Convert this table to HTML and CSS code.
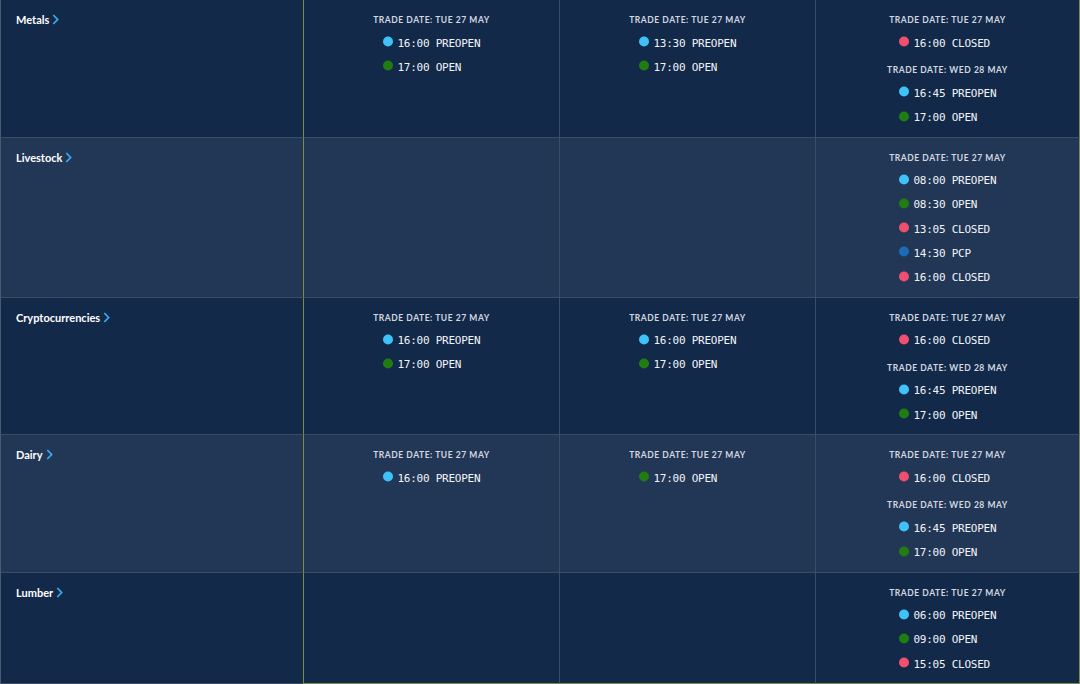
FILE: index.html
```html
<!DOCTYPE html>
<html>
<head>
<meta charset="utf-8">
<link rel="stylesheet" href="styles.css">
</head>
<body>
<div class="grid">
  <!-- Row 1 -->
  <div class="cell label-cell row-dark"><span class="label">Metals</span><svg class="chev" viewBox="0 0 7 11" width="7" height="11"><path d="M1.3 1 L5.6 5.5 L1.3 10" /></svg></div>
  <div class="cell c2 row-dark">
    <div class="group"><div class="hdr">Trade Date: Tue 27 May</div>
      <ul class="items"><li><i class="dot pre"></i>16:00 PREOPEN</li><li><i class="dot open"></i>17:00 OPEN</li></ul></div>
  </div>
  <div class="cell c3 row-dark">
    <div class="group"><div class="hdr">Trade Date: Tue 27 May</div>
      <ul class="items"><li><i class="dot pre"></i>13:30 PREOPEN</li><li><i class="dot open"></i>17:00 OPEN</li></ul></div>
  </div>
  <div class="cell c4 row-dark">
    <div class="group"><div class="hdr">Trade Date: Tue 27 May</div>
      <ul class="items"><li><i class="dot closed"></i>16:00 CLOSED</li></ul></div>
    <div class="group"><div class="hdr">Trade Date: Wed 28 May</div>
      <ul class="items"><li><i class="dot pre"></i>16:45 PREOPEN</li><li><i class="dot open"></i>17:00 OPEN</li></ul></div>
  </div>

  <!-- Row 2 -->
  <div class="cell label-cell row-light"><span class="label">Livestock</span><svg class="chev" viewBox="0 0 7 11" width="7" height="11"><path d="M1.3 1 L5.6 5.5 L1.3 10" /></svg></div>
  <div class="cell c2 row-light"></div>
  <div class="cell c3 row-light"></div>
  <div class="cell c4 row-light">
    <div class="group"><div class="hdr">Trade Date: Tue 27 May</div>
      <ul class="items">
        <li><i class="dot pre"></i>08:00 PREOPEN</li>
        <li><i class="dot open"></i>08:30 OPEN</li>
        <li><i class="dot closed"></i>13:05 CLOSED</li>
        <li><i class="dot pcp"></i>14:30 PCP</li>
        <li><i class="dot closed"></i>16:00 CLOSED</li>
      </ul></div>
  </div>

  <!-- Row 3 -->
  <div class="cell label-cell row-dark"><span class="label">Cryptocurrencies</span><svg class="chev" viewBox="0 0 7 11" width="7" height="11"><path d="M1.3 1 L5.6 5.5 L1.3 10" /></svg></div>
  <div class="cell c2 row-dark">
    <div class="group"><div class="hdr">Trade Date: Tue 27 May</div>
      <ul class="items"><li><i class="dot pre"></i>16:00 PREOPEN</li><li><i class="dot open"></i>17:00 OPEN</li></ul></div>
  </div>
  <div class="cell c3 row-dark">
    <div class="group"><div class="hdr">Trade Date: Tue 27 May</div>
      <ul class="items"><li><i class="dot pre"></i>16:00 PREOPEN</li><li><i class="dot open"></i>17:00 OPEN</li></ul></div>
  </div>
  <div class="cell c4 row-dark">
    <div class="group"><div class="hdr">Trade Date: Tue 27 May</div>
      <ul class="items"><li><i class="dot closed"></i>16:00 CLOSED</li></ul></div>
    <div class="group"><div class="hdr">Trade Date: Wed 28 May</div>
      <ul class="items"><li><i class="dot pre"></i>16:45 PREOPEN</li><li><i class="dot open"></i>17:00 OPEN</li></ul></div>
  </div>

  <!-- Row 4 -->
  <div class="cell label-cell row-light"><span class="label">Dairy</span><svg class="chev" viewBox="0 0 7 11" width="7" height="11"><path d="M1.3 1 L5.6 5.5 L1.3 10" /></svg></div>
  <div class="cell c2 row-light">
    <div class="group"><div class="hdr">Trade Date: Tue 27 May</div>
      <ul class="items"><li><i class="dot pre"></i>16:00 PREOPEN</li></ul></div>
  </div>
  <div class="cell c3 row-light">
    <div class="group"><div class="hdr">Trade Date: Tue 27 May</div>
      <ul class="items"><li><i class="dot open"></i>17:00 OPEN</li></ul></div>
  </div>
  <div class="cell c4 row-light">
    <div class="group"><div class="hdr">Trade Date: Tue 27 May</div>
      <ul class="items"><li><i class="dot closed"></i>16:00 CLOSED</li></ul></div>
    <div class="group"><div class="hdr">Trade Date: Wed 28 May</div>
      <ul class="items"><li><i class="dot pre"></i>16:45 PREOPEN</li><li><i class="dot open"></i>17:00 OPEN</li></ul></div>
  </div>

  <!-- Row 5 -->
  <div class="cell label-cell row-dark last"><span class="label">Lumber</span><svg class="chev" viewBox="0 0 7 11" width="7" height="11"><path d="M1.3 1 L5.6 5.5 L1.3 10" /></svg></div>
  <div class="cell c2 row-dark last"></div>
  <div class="cell c3 row-dark last"></div>
  <div class="cell c4 row-dark last">
    <div class="group"><div class="hdr">Trade Date: Tue 27 May</div>
      <ul class="items">
        <li><i class="dot pre"></i>06:00 PREOPEN</li>
        <li><i class="dot open"></i>09:00 OPEN</li>
        <li><i class="dot closed"></i>15:05 CLOSED</li>
      </ul></div>
  </div>
</div>
</body>
</html>
```

FILE: styles.css
```css
html, body {
  margin: 0;
  padding: 0;
  background: #122949;
  overflow: hidden;
}

.grid {
  display: grid;
  grid-template-columns: 303px 257px 256px 264px;
  width: 1080px;
}

.cell {
  box-sizing: border-box;
  border-bottom: 1px solid #3b4d64;
  padding: 13px 0 6.75px;
}

.row-dark { background: #122949; }
.row-light { background: #223656; }

.label-cell {
  border-left: 1px solid #4a5b72;
  padding-left: 15px;
  display: flex;
  align-items: flex-start;
  gap: 3px;
}

.label {
  font-family: "Lato", "Open Sans", sans-serif;
  font-weight: 700;
  font-size: 11px;
  line-height: 13px;
  color: #ffffff;
}

.chev {
  margin-top: 1px;
  fill: none;
  stroke: #35acee;
  stroke-width: 1.8;
}

.c2 {
  border-left: 1px solid #7a8d4a;
  border-right: 1px solid #3b4d64;
}

.c3 {
  border-right: 1px solid #3b4d64;
}

.c4 {
  border-right: 1px solid #7a8d4a;
}

.last.c2, .last.c3, .last.c4 {
  border-bottom-color: #7a8d4a;
}

.group + .group {
  margin-top: 8px;
}

.hdr {
  font-family: "Lato", "Open Sans", sans-serif;
  font-weight: 700;
  font-size: 8.5px;
  letter-spacing: 0.55px;
  line-height: 14px;
  text-transform: uppercase;
  color: #d3d8e0;
  text-align: center;
  margin-bottom: 4px;
}

.items {
  list-style: none;
  margin: 0 auto;
  padding: 0;
  width: 98px;
}

.items li {
  display: flex;
  align-items: center;
  height: 24.25px;
  font-family: "DejaVu Sans Mono", "Liberation Mono", monospace;
  font-size: 11px;
  letter-spacing: -0.25px;
  color: #f2f4f8;
  white-space: nowrap;
}

.dot {
  display: block;
  width: 10px;
  height: 10px;
  border-radius: 50%;
  margin-right: 5px;
  flex: none;
  transform: translateY(-1.5px);
}

.dot.pre { background: #3ec2f7; }
.dot.open { background: #1f7d12; }
.dot.closed { background: #f04f70; }
.dot.pcp { background: #1a6cbb; }
```
